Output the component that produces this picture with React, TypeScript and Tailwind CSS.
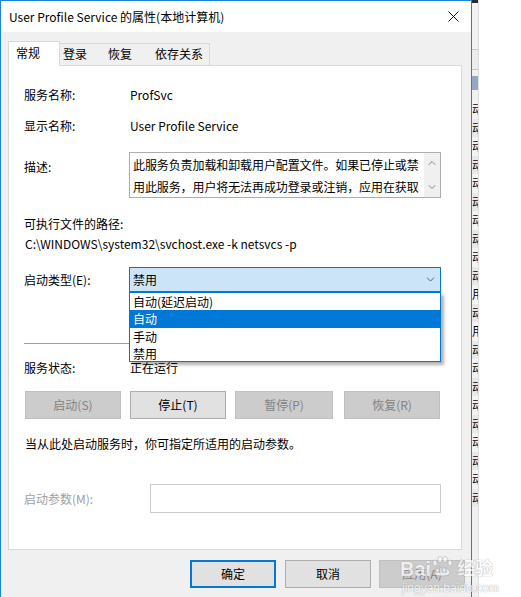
import { ChevronDown, ChevronUp } from "lucide-react";

const font = "font-['Noto_Sans_CJK_SC','Noto_Sans',sans-serif]";

const tabs = [
  { label: "常规", w: "w-[52px]", active: true },
  { label: "登录", w: "w-[46px]" },
  { label: "恢复", w: "w-[48px]" },
  { label: "依存关系", w: "w-[59px]" },
];

const stripRows = [
  "动", "动", "动", "动", "动", "动", "动", "动", "动", "动",
  "用", "动", "用", "动", "动", "动", "动", "动", "动", "动", "动", "动",
];

const Row = ({ label, value }: { label: string; value: string }) => (
  <div className="flex leading-[16px]">
    <span className="w-[106px]">{label}</span>
    <span>{value}</span>
  </div>
);

const ActionButton = ({
  children,
  disabled,
  className,
}: {
  children: string;
  disabled?: boolean;
  className?: string;
}) => (
  <div
    className={`h-[28px] flex items-center justify-center border ${
      disabled
        ? "bg-[#cccccc] border-[#bfbfbf] text-[#838383]"
        : "bg-[#e1e1e1] border-[#adadad] text-black"
    } ${className ?? ""}`}
  >
    {children}
  </div>
);

export default function App() {
  return (
    <div className={`w-[521px] h-[597px] bg-white flex overflow-hidden relative text-[12px] text-black ${font}`}>
      {/* dialog */}
      <div className="w-[472px] h-full shrink-0 border-l border-t border-r border-[#1883d7] bg-[#f0f0f0] flex flex-col">
        <div className="h-[31px] bg-white flex items-center justify-between pl-[8px] pr-[10px]">
          <span className="leading-[16px]">User Profile Service 的属性(本地计算机)</span>
          <svg width="11" height="11" viewBox="0 0 11 11" className="mr-[2px]">
            <path d="M0.5 0.5 L10.5 10.5 M10.5 0.5 L0.5 10.5" stroke="#111" strokeWidth="1" />
          </svg>
        </div>

        <div className="pl-[7px] pt-[9px] flex flex-col">
          {/* tabs */}
          <div className="flex items-end h-[24px]">
            {tabs.map((t) =>
              t.active ? (
                <div
                  key={t.label}
                  className={`${t.w} h-[25px] -mb-px relative z-10 bg-white border-l border-t border-r border-[#d9d9d9] pl-[7px] pt-[3px] leading-[16px]`}
                >
                  {t.label}
                </div>
              ) : (
                <div
                  key={t.label}
                  className={`${t.w} h-[22px] border-t border-r border-[#d9d9d9] bg-[#f0f0f0] pl-[4px] pt-[2px] leading-[16px] -ml-px first:ml-0`}
                >
                  {t.label}
                </div>
              )
            )}
          </div>

          {/* panel */}
          <div className="w-[454px] h-[485px] bg-white border border-[#d9d9d9] flex flex-col pl-[15px] pr-[20px] pt-[21px]">
            <Row label="服务名称:" value="ProfSvc" />
            <div className="mt-[15px]">
              <Row label="显示名称:" value="User Profile Service" />
            </div>

            <div className="mt-[18px] flex">
              <span className="w-[105px] mt-[7px] leading-[16px]">描述:</span>
              <div className="w-[312px] h-[46px] border border-[#adadad] flex">
                <div className="flex-1 pl-[3px] pt-[1px] leading-[22px] tracking-[-0.1px] overflow-hidden">
                  此服务负责加载和卸载用户配置文件。如果已停止或禁
                  <br />
                  用此服务，用户将无法再成功登录或注销，应用在获取
                </div>
                <div className="w-[16px] bg-[#f0f0f0] flex flex-col items-center justify-between py-[4px] text-[#606060]">
                  <ChevronUp size={12} strokeWidth={1.5} />
                  <ChevronDown size={12} strokeWidth={1.5} />
                </div>
              </div>
            </div>

            <div className="mt-[18px] leading-[16px]">可执行文件的路径:</div>
            <div className="mt-[4px] leading-[16px] pl-[1px]">C:\WINDOWS\system32\svchost.exe -k netsvcs -p</div>

            <div className="mt-[15px] flex items-center">
              <span className="w-[105px] leading-[16px]">启动类型(E):</span>
              <div className="relative">
                <div className="w-[312px] h-[25px] bg-[#cce4f7] border border-[#0078d7] flex items-center justify-between pl-[3px] pr-[3px]">
                  <span className="leading-[16px]">禁用</span>
                  <ChevronDown size={13} strokeWidth={1.4} className="text-[#404040]" />
                </div>
                <div className="absolute left-0 top-[25px] z-20 w-[312px] h-[70px] bg-white border border-[#0078d7] shadow-[3px_3px_3px_rgba(0,0,0,0.3)] flex flex-col">
                  <div className="h-[17px] pl-[3px] leading-[17px]">自动(延迟启动)</div>
                  <div className="h-[18px] pl-[3px] leading-[18px] bg-[#0078d7] text-white">自动</div>
                  <div className="h-[17px] pl-[3px] leading-[17px]">手动</div>
                  <div className="h-[17px] pl-[3px] leading-[17px]">禁用</div>
                </div>
              </div>
            </div>

            <div className="mt-[51px] h-px bg-[#a0a0a0]" />

            <div className="mt-[16px]">
              <Row label="服务状态:" value="正在运行" />
            </div>

            <div className="mt-[15px] flex pl-[1px]">
              <ActionButton disabled className="w-[96px]">启动(S)</ActionButton>
              <ActionButton className="w-[96px] ml-[9px]">停止(T)</ActionButton>
              <ActionButton disabled className="w-[98px] ml-[9px]">暂停(P)</ActionButton>
              <ActionButton disabled className="w-[96px] ml-[11px]">恢复(R)</ActionButton>
            </div>

            <div className="mt-[17px] leading-[16px] pl-[1px]">当从此处启动服务时，你可指定所适用的启动参数。</div>

            <div className="mt-[32px] flex items-center">
              <span className="w-[126px] leading-[16px] text-[#a0a0a0]">启动参数(M):</span>
              <div className="w-[291px] h-[29px] border border-[#cccccc] bg-white" />
            </div>
          </div>

          {/* footer */}
          <div className="mt-[10px] flex justify-end pr-[6px]">
            <div className="w-[86px] h-[28px] border-2 border-[#0078d7] bg-[#e1e1e1] flex items-center justify-center">确定</div>
            <div className="w-[86px] h-[28px] ml-[9px] border border-[#adadad] bg-[#e1e1e1] flex items-center justify-center">取消</div>
            <div className="w-[86px] h-[28px] ml-[8px] border border-[#bfbfbf] bg-[#cccccc] text-[#838383] flex items-center justify-center">应用(A)</div>
          </div>
        </div>
      </div>

      {/* window behind the dialog */}
      <div className="w-[7px] h-full shrink-0 bg-[#f0f0f0] overflow-hidden flex flex-col border-r border-[#e0e0e0]">
        <div className="h-[3px] bg-[#2b2b2b]" />
        <div className="h-[47px] bg-[#f2f2f2] border-b border-[#c8c8c8]" />
        <div className="h-[20px] bg-[#ececec] border-b border-[#c8c8c8]" />
        <div className="h-[6px]" />
        <div className="h-[14px] bg-[#94a8c4]" />
        <div className="pt-[10px] flex flex-col">
          {stripRows.map((c, i) => (
            <div key={i} className={`h-[18.5px] leading-[18.5px] whitespace-nowrap ${i % 2 ? "bg-[#e8e8e8]" : "bg-[#f4f4f4]"}`}>
              {c}
            </div>
          ))}
        </div>
      </div>

      {/* watermark */}
      <div className="absolute left-[400px] top-[558px] z-30 w-max whitespace-nowrap flex flex-col items-start text-white opacity-70 pointer-events-none [text-shadow:0_0_1px_#9a9a9a,0_0_1px_#9a9a9a]">
        <div className="flex items-center whitespace-nowrap text-[20px] leading-[22px] font-['Liberation_Sans','Noto_Sans_CJK_SC',sans-serif] font-bold">
          <span>Bai</span>
          <span className="relative w-[22px] h-[22px] shrink-0">
            <svg width="22" height="22" viewBox="0 0 22 22" className="absolute left-0 top-[-2px]">
              <g fill="#fff" stroke="#a8a8a8" strokeWidth="0.8">
                <ellipse cx="4" cy="7" rx="2.2" ry="3" />
                <ellipse cx="9" cy="3.5" rx="2.2" ry="3" />
                <ellipse cx="14" cy="3.5" rx="2.2" ry="3" />
                <ellipse cx="19" cy="7" rx="2.2" ry="3" />
                <path d="M3 17 C3 10 19 10 19 17 C19 21 3 21 3 17 Z" />
              </g>
            </svg>
            <span className="absolute left-[3px] top-[5px] text-[11px] leading-[12px] text-[#bdbdbd] [text-shadow:none]">du</span>
          </span>
          <span className="ml-[4px] text-[18px]">经验</span>
        </div>
        <div className="text-[12px] leading-[14px] mt-[1px] ml-[2px] font-['Liberation_Sans',sans-serif]">jingyan.baidu.com</div>
      </div>
    </div>
  );
}
